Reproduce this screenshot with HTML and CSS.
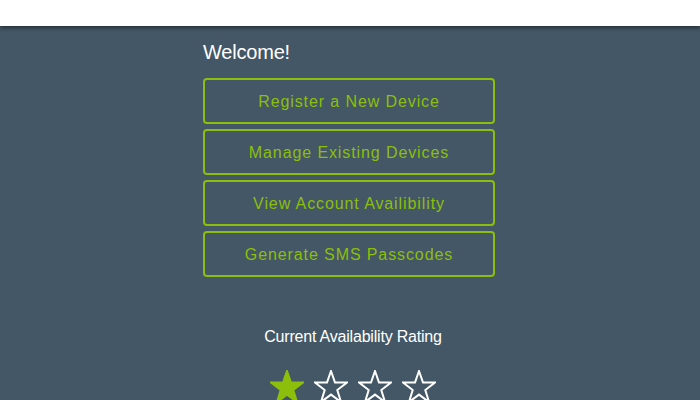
FILE: index.html
```html
<!DOCTYPE html>
<html>
<head>
<meta charset="utf-8">
<link rel="stylesheet" href="styles.css">
</head>
<body>
<header class="topbar"></header>
<main class="content">
  <h1 class="welcome">Welcome!</h1>
  <nav class="menu">
    <a class="menu-btn" href="#">Register a New Device</a>
    <a class="menu-btn" href="#">Manage Existing Devices</a>
    <a class="menu-btn" href="#">View Account Availibility</a>
    <a class="menu-btn" href="#">Generate SMS Passcodes</a>
  </nav>
  <section class="rating">
    <div class="rating-title">Current Availability Rating</div>
    <div class="stars">
      <svg class="star filled" viewBox="0 0 34 34"><polygon points="17,1 21,12.6 33,12.6 23.3,20 27,32 17,24.6 7,32 10.7,20 1,12.6 13,12.6"/></svg>
      <svg class="star" viewBox="0 0 34 34"><polygon points="17,1 21,12.6 33,12.6 23.3,20 27,32 17,24.6 7,32 10.7,20 1,12.6 13,12.6"/></svg>
      <svg class="star" viewBox="0 0 34 34"><polygon points="17,1 21,12.6 33,12.6 23.3,20 27,32 17,24.6 7,32 10.7,20 1,12.6 13,12.6"/></svg>
      <svg class="star" viewBox="0 0 34 34"><polygon points="17,1 21,12.6 33,12.6 23.3,20 27,32 17,24.6 7,32 10.7,20 1,12.6 13,12.6"/></svg>
    </div>
  </section>
</main>
</body>
</html>
```
FILE: styles.css
```css
html, body {
  margin: 0;
  padding: 0;
  background: #435766;
  font-family: "Liberation Sans", Arial, sans-serif;
}
.topbar {
  height: 26px;
  background: #ffffff;
  box-shadow: 0 2px 4px rgba(0,0,0,0.45);
  position: relative;
}
.content {
  width: 300px;
  margin-left: 203px;
  padding-top: 15px;
}
.welcome {
  margin: 0 0 15px 0;
  font-size: 20px;
  font-weight: normal;
  color: #ffffff;
  line-height: 22px;
  letter-spacing: -0.2px;
}
.menu {
  display: flex;
  flex-direction: column;
  gap: 5px;
  width: 292px;
}
.menu-btn {
  display: block;
  box-sizing: border-box;
  height: 46px;
  border: 2px solid #8cbf0b;
  border-radius: 4px;
  color: #8cbf0b;
  text-decoration: none;
  text-align: center;
  font-size: 16px;
  line-height: 43px;
  letter-spacing: 0.9px;
}
.rating {
  margin-top: 50px;
  text-align: center;
}
.rating-title {
  color: #ffffff;
  font-size: 16px;
  line-height: 20px;
  letter-spacing: -0.2px;
}
.stars {
  display: flex;
  justify-content: center;
  gap: 10px;
  margin-top: 23px;
}
.star {
  width: 34px;
  height: 34px;
}
.star polygon {
  fill: none;
  stroke: #ffffff;
  stroke-width: 2;
}
.star.filled polygon {
  fill: #8cbf0b;
  stroke: #8cbf0b;
}
```
